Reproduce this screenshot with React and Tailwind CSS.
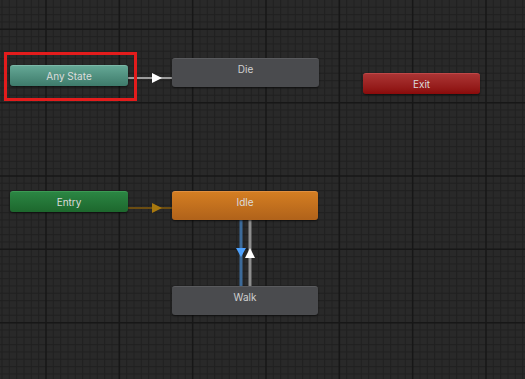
import React from 'react';

const W = 525;
const H = 379;
const STEP = 73.333;

// grid lines of the canvas: a major line every 10 minor ones
const gridLines = () => {
  const minor = [];
  const major = [];
  for (let k = -10; k < 80; k++) {
    const x = 46 + (k * STEP) / 10;
    if (x < 0 || x > W) continue;
    (k % 10 === 0 ? major : minor).push(['v', x]);
  }
  for (let k = -10; k < 60; k++) {
    const y = 29.3 + (k * STEP) / 10;
    if (y < 0 || y > H) continue;
    (k % 10 === 0 ? major : minor).push(['h', y]);
  }
  return { minor, major };
};

const Node = ({ label, x, y, w, h, className, text = 'text-[#dcdcdc]' }) => (
  <div
    className={`absolute rounded-[3px] shadow-[0_1px_2px_rgba(0,0,0,0.6)] ${className}`}
    style={{ left: x, top: y, width: w, height: h }}
  >
    <div className={`h-[21px] flex items-center justify-center text-[10px] ${text}`}>{label}</div>
  </div>
);

export default function App() {
  const { minor, major } = gridLines();

  return (
    <div
      className="relative w-[525px] h-[379px] overflow-hidden bg-[#292929]"
      style={{ fontFamily: 'Inter, "Noto Sans", sans-serif' }}
    >
      <svg className="absolute inset-0" width={W} height={H}>
        {minor.map(([d, v], i) =>
          d === 'v' ? (
            <line key={'m' + i} x1={v} y1={0} x2={v} y2={H} stroke="#212121" strokeWidth="1" />
          ) : (
            <line key={'m' + i} x1={0} y1={v} x2={W} y2={v} stroke="#212121" strokeWidth="1" />
          )
        )}
        {major.map(([d, v], i) =>
          d === 'v' ? (
            <line key={'M' + i} x1={v} y1={0} x2={v} y2={H} stroke="#171717" strokeWidth="1.5" />
          ) : (
            <line key={'M' + i} x1={0} y1={v} x2={W} y2={v} stroke="#171717" strokeWidth="1.5" />
          )
        )}

        {/* Any State -> Die */}
        <line x1="128" y1="78" x2="172" y2="78" stroke="#9c9c9c" strokeWidth="2" />
        <polygon points="152,73 152,83 162,78" fill="#ffffff" />

        {/* Entry -> Idle */}
        <line x1="128" y1="208" x2="172" y2="208" stroke="#6b4d12" strokeWidth="2" />
        <polygon points="152,203 152,213 162,208" fill="#a8780e" />

        {/* Idle <-> Walk */}
        <line x1="241" y1="219" x2="241" y2="287" stroke="#3c6a99" strokeWidth="3" />
        <line x1="250" y1="219" x2="250" y2="287" stroke="#8e8e8e" strokeWidth="3" />
        <polygon points="236,248 246,248 241,257" fill="#4da2ff" />
        <polygon points="250,248 255,258 245,258" fill="#ffffff" />
      </svg>

      <div className="absolute left-[4px] top-[52px] w-[133px] h-[49px] border-[3px] border-[#e31c1c]" />

      <Node
        label="Any State"
        x={10}
        y={65}
        w={118}
        h={21}
        className="bg-gradient-to-b from-[#64a795] to-[#3e7b6b] border-t border-[#7cb8a8]"
      />
      <Node
        label="Die"
        x={172}
        y={58}
        w={147}
        h={29}
        className="bg-[#4a4b4e] border-t border-[#5a5b5e]"
        text="text-[#d0d0d0]"
      />
      <Node
        label="Exit"
        x={363}
        y={73}
        w={117}
        h={21}
        className="bg-gradient-to-b from-[#ab3434] to-[#8a0a0a] border-t border-[#c04848]"
      />
      <Node
        label="Entry"
        x={10}
        y={191}
        w={118}
        h={21}
        className="bg-gradient-to-b from-[#2b8643] to-[#1d672d] border-t border-[#3c9a54]"
      />
      <Node
        label="Idle"
        x={172}
        y={191}
        w={146}
        h={29}
        className="bg-gradient-to-b from-[#d47e22] to-[#b0621a] border-t border-[#e09040]"
      />
      <Node
        label="Walk"
        x={172}
        y={286}
        w={146}
        h={29}
        className="bg-[#4a4b4e] border-t border-[#5a5b5e]"
        text="text-[#d0d0d0]"
      />
    </div>
  );
}
